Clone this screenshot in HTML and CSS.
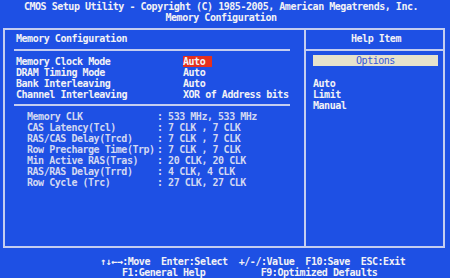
FILE: index.html
```html
<!DOCTYPE html>
<html lang="en">
<head>
  <meta charset="UTF-8" />
  <title>CMOS Setup Utility - Memory Configuration</title>
  <link rel="stylesheet" href="styles.css">
</head>
<body>
  <div class="screen">
    <header class="title">
      <div class="title-line">CMOS Setup Utility - Copyright (C) 1985-2005, American Megatrends, Inc.</div>
      <div class="title-line">Memory Configuration</div>
    </header>

    <main class="frame">
      <!-- Settings panel -->
      <section class="main-panel">
        <div class="panel-head">Memory Configuration</div>
        <hr class="rule">
        <div class="setting"><span class="label">Memory Clock Mode</span><span class="value selected">Auto</span></div>
        <div class="setting"><span class="label">DRAM Timing Mode</span><span class="value">Auto</span></div>
        <div class="setting"><span class="label">Bank Interleaving</span><span class="value">Auto</span></div>
        <div class="setting"><span class="label">Channel Interleaving</span><span class="value">XOR of Address bits</span></div>
        <hr class="rule">
        <div class="info"><span class="info-label">Memory CLK</span><span>: 533 MHz, 533 MHz</span></div>
        <div class="info"><span class="info-label">CAS Latency(Tcl)</span><span>: 7 CLK , 7 CLK</span></div>
        <div class="info"><span class="info-label">RAS/CAS Delay(Trcd)</span><span>: 7 CLK , 7 CLK</span></div>
        <div class="info"><span class="info-label">Row Precharge Time(Trp)</span><span>: 7 CLK , 7 CLK</span></div>
        <div class="info"><span class="info-label">Min Active RAS(Tras)</span><span>: 20 CLK, 20 CLK</span></div>
        <div class="info"><span class="info-label">RAS/RAS Delay(Trrd)</span><span>: 4 CLK, 4 CLK</span></div>
        <div class="info"><span class="info-label">Row Cycle (Trc)</span><span>: 27 CLK, 27 CLK</span></div>
      </section>

      <!-- Help panel -->
      <aside class="help-panel">
        <div class="panel-head center">Help Item</div>
        <hr class="rule full">
        <div class="options">Options</div>
        <ul class="choices">
          <li>Auto</li>
          <li>Limit</li>
          <li>Manual</li>
        </ul>
      </aside>
    </main>

    <footer class="keys">
      <div class="keys-row">↑↓←→:Move  Enter:Select  +/-/:Value  F10:Save  ESC:Exit</div>
      <div class="keys-row second">F1:General Help          F9:Optimized Defaults</div>
    </footer>
  </div>
</body>
</html>
```

FILE: styles.css
```css
:root {
  --bios-blue: #1e50e4;
  --text: #f2f2f6;
  --dim-text: #d2d8f2;
  --line: #c4cdf0;
  --highlight: #e6301e;
  --option-bg: #e6e2cc;
  --option-text: #3558d8;
}
* {
  box-sizing: border-box;
}
html, body {
  margin: 0;
  padding: 0;
  background: var(--bios-blue);
}
body {
  font-family: 'DejaVu Sans Mono', 'Liberation Mono', monospace;
  font-weight: bold;
  font-size: 10px;
  letter-spacing: -0.47px;
  line-height: 11px;
  color: var(--text);
}
.screen {
  width: 450px;
  height: 278px;
  overflow: hidden;
}
.title {
  padding: 1px 8px 0 0;
  text-align: center;
}
.title-line {
  height: 11px;
  white-space: pre;
}
.frame {
  display: flex;
  margin: 5px 0 0 3px;
  width: 442px;
  height: 220px;
  border: 2px solid var(--line);
}
.main-panel {
  width: 299px;
  padding: 3px 14px 0 11px;
}
.help-panel {
  flex: 1;
  border-left: 2px solid var(--line);
  padding-top: 3px;
}
.panel-head {
  height: 11px;
  white-space: pre;
}
.panel-head.center {
  text-align: center;
  padding-left: 3px;
}
.rule {
  border: 0;
  height: 2px;
  background: var(--line);
  margin: 5px 0 5px -2px;
}
.rule.full {
  margin: 5px 0 0 0;
}
.setting + .rule {
  margin-top: 4px;
}
.setting,
.info {
  display: flex;
  height: 11px;
  white-space: pre;
}
.label {
  width: 167px;
}
.value {
  display: inline-block;
}
.value.selected {
  width: 29px;
  background: var(--highlight);
}
.info {
  color: var(--dim-text);
  padding-left: 11px;
}
.info-label {
  width: 130px;
}
.options {
  margin: 4px 5px 0 7px;
  height: 11px;
  background: var(--option-bg);
  color: var(--option-text);
  font-weight: normal;
  text-align: center;
}
.choices {
  list-style: none;
  margin: 12px 0 0 0;
  padding: 0 0 0 7px;
}
.choices li {
  height: 11px;
}
.keys {
  padding-top: 8px;
}
.keys-row {
  height: 11px;
  padding-left: 100px;
  white-space: pre;
}
.keys-row.second {
  padding-left: 122px;
}
```
